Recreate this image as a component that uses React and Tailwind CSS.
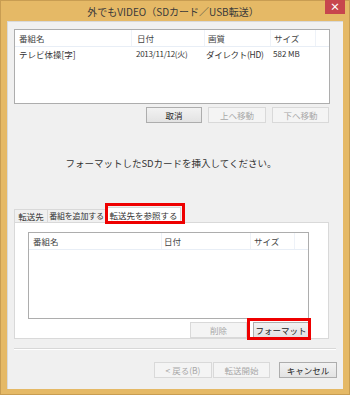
import React from "react";

const font = { fontFamily: '"Noto Sans CJK JP", "Noto Sans", sans-serif' };

function Btn({ children, w, disabled, className = "" }) {
  return (
    <div
      className={
        "flex items-center justify-center shrink-0 whitespace-nowrap h-[16px] text-[8.5px] leading-none border " +
        (disabled
          ? "border-[#d9d9d9] bg-[#f4f4f4] text-[#a8a8a8] "
          : "border-[#adadad] bg-gradient-to-b from-[#f2f2f2] to-[#e3e3e3] text-[#222] ") +
        className
      }
      style={{ width: w }}
    >
      {children}
    </div>
  );
}

const cell = "shrink-0 whitespace-nowrap overflow-hidden flex items-center";

export default function App() {
  return (
    <div
      className="w-[350px] h-[395px] bg-[#e5b966] border border-[#c89d52] flex flex-col text-[#333] relative"
      style={font}
    >
      {/* title bar */}
      <div className="h-[20px] flex items-start shrink-0">
        <div className="flex-1 h-[20px] flex items-center justify-center pl-[20px] text-[10px] text-[#3a3a3a] whitespace-nowrap">
          外でもVIDEO（SDカード／USB転送）
        </div>
        <div className="w-[20px] h-[14px] bg-[#c7464d] mr-[4px] -mt-[1px] flex items-center justify-center text-white text-[10px] leading-none font-bold">
          ×
        </div>
      </div>

      {/* content */}
      <div className="mx-[6px] h-[368px] bg-[#f0f0f0] border-t border-l border-[#d9d9d9] flex flex-col">
        {/* top list */}
        <div className="ml-[6px] mt-[7px] w-[316px] h-[75px] bg-white border border-[#adadad]">
          <div className="h-[17px] flex text-[8.5px] text-[#444] border-b border-[#e8eef6]">
            <div className={cell + " w-[117px] pl-[4px] border-r border-[#eef2f8]"}>番組名</div>
            <div className={cell + " w-[73px] pl-[5px] border-r border-[#eef2f8]"}>日付</div>
            <div className={cell + " w-[66px] pl-[3px] border-r border-[#eef2f8]"}>画質</div>
            <div className={cell + " w-[45px] pl-[3px] border-r border-[#eef2f8]"}>サイズ</div>
          </div>
          <div className="h-[14px] flex text-[8.5px] text-[#333] items-center">
            <div className={cell + " w-[117px] pl-[4px]"}>テレビ体操[字]</div>
            <div className={cell + " w-[73px] pl-[4px] text-[8px] tracking-[-0.3px]"}>2013/11/12(火)</div>
            <div className={cell + " w-[66px] pl-[1px] tracking-[-0.3px]"}>ダイレクト(HD)</div>
            <div className={cell + " w-[45px] pl-[2px] text-[8px]"}>582 MB</div>
          </div>
        </div>

        {/* buttons */}
        <div className="mt-[3px] flex w-[321px] justify-end gap-[6px]">
          <Btn w={56}>取消</Btn>
          <Btn w={58} disabled>上へ移動</Btn>
          <Btn w={57} disabled>下へ移動</Btn>
        </div>

        {/* message */}
        <div className="mt-[33px] w-[326px] text-center text-[9.5px] text-[#333] whitespace-nowrap">
          フォーマットしたSDカードを挿入してください。
        </div>

        {/* tabs */}
        <div className="mt-[35px] ml-[6px] flex items-end h-[17px] relative">
          <div className="h-[13px] w-[34px] shrink-0 whitespace-nowrap flex items-center justify-center text-[8.5px] bg-[#f0f0f0] border border-b-0 border-[#d9d9d9]">
            転送先
          </div>
          <div className="h-[13px] w-[58px] shrink-0 whitespace-nowrap flex items-center justify-center text-[8px] tracking-[-0.2px] bg-[#f0f0f0] border border-l-0 border-b-0 border-[#d9d9d9]">
            番組を追加する
          </div>
          <div className="h-[16px] w-[75px] shrink-0 whitespace-nowrap flex items-center justify-center text-[8.5px] bg-white border border-b-0 border-[#d9d9d9] -mb-px relative z-10">
            転送先を参照する
          </div>
          <div className="absolute left-[91px] top-[-2px] w-[80px] h-[21px] border-[3px] border-[#ee0000] z-20" />
        </div>

        {/* tab panel */}
        <div className="ml-[6px] w-[315px] h-[117px] bg-white border border-[#d9d9d9] flex flex-col relative">
          <div className="ml-[13px] mt-[9px] w-[281px] h-[88px] border border-[#adadad]">
            <div className="h-[17px] flex text-[8.5px] text-[#444] border-b border-[#e8eef6]">
              <div className={cell + " w-[133px] pl-[4px] border-r border-[#eef2f8]"}>番組名</div>
              <div className={cell + " w-[89px] pl-[2px] border-r border-[#eef2f8]"}>日付</div>
              <div className={cell + " w-[44px] pl-[3px] border-r border-[#eef2f8]"}>サイズ</div>
            </div>
          </div>
          <div className="mt-[3px] flex w-[294px] justify-end gap-[6px]">
            <Btn w={57} disabled>削除</Btn>
            <Btn w={56} className="border-[#7eb4ea] from-[#f0f6fc] to-[#e0ecf8]">フォーマット</Btn>
          </div>
          <div className="absolute left-[232px] top-[95px] w-[64px] h-[22px] border-[3px] border-[#ee0000]" />
        </div>

        {/* separator */}
        <div className="mt-[9px] ml-[6px] w-[322px] h-[2px] bg-[#d8d8d8] border-b border-white" />

        {/* bottom buttons */}
        <div className="mt-[12px] flex w-[329px] justify-end">
          <Btn w={58} disabled>&lt; 戻る(B)</Btn>
          <Btn w={57} disabled className="ml-[1px]">転送開始</Btn>
          <Btn w={58} className="ml-[9px]">キャンセル</Btn>
        </div>
      </div>
    </div>
  );
}
